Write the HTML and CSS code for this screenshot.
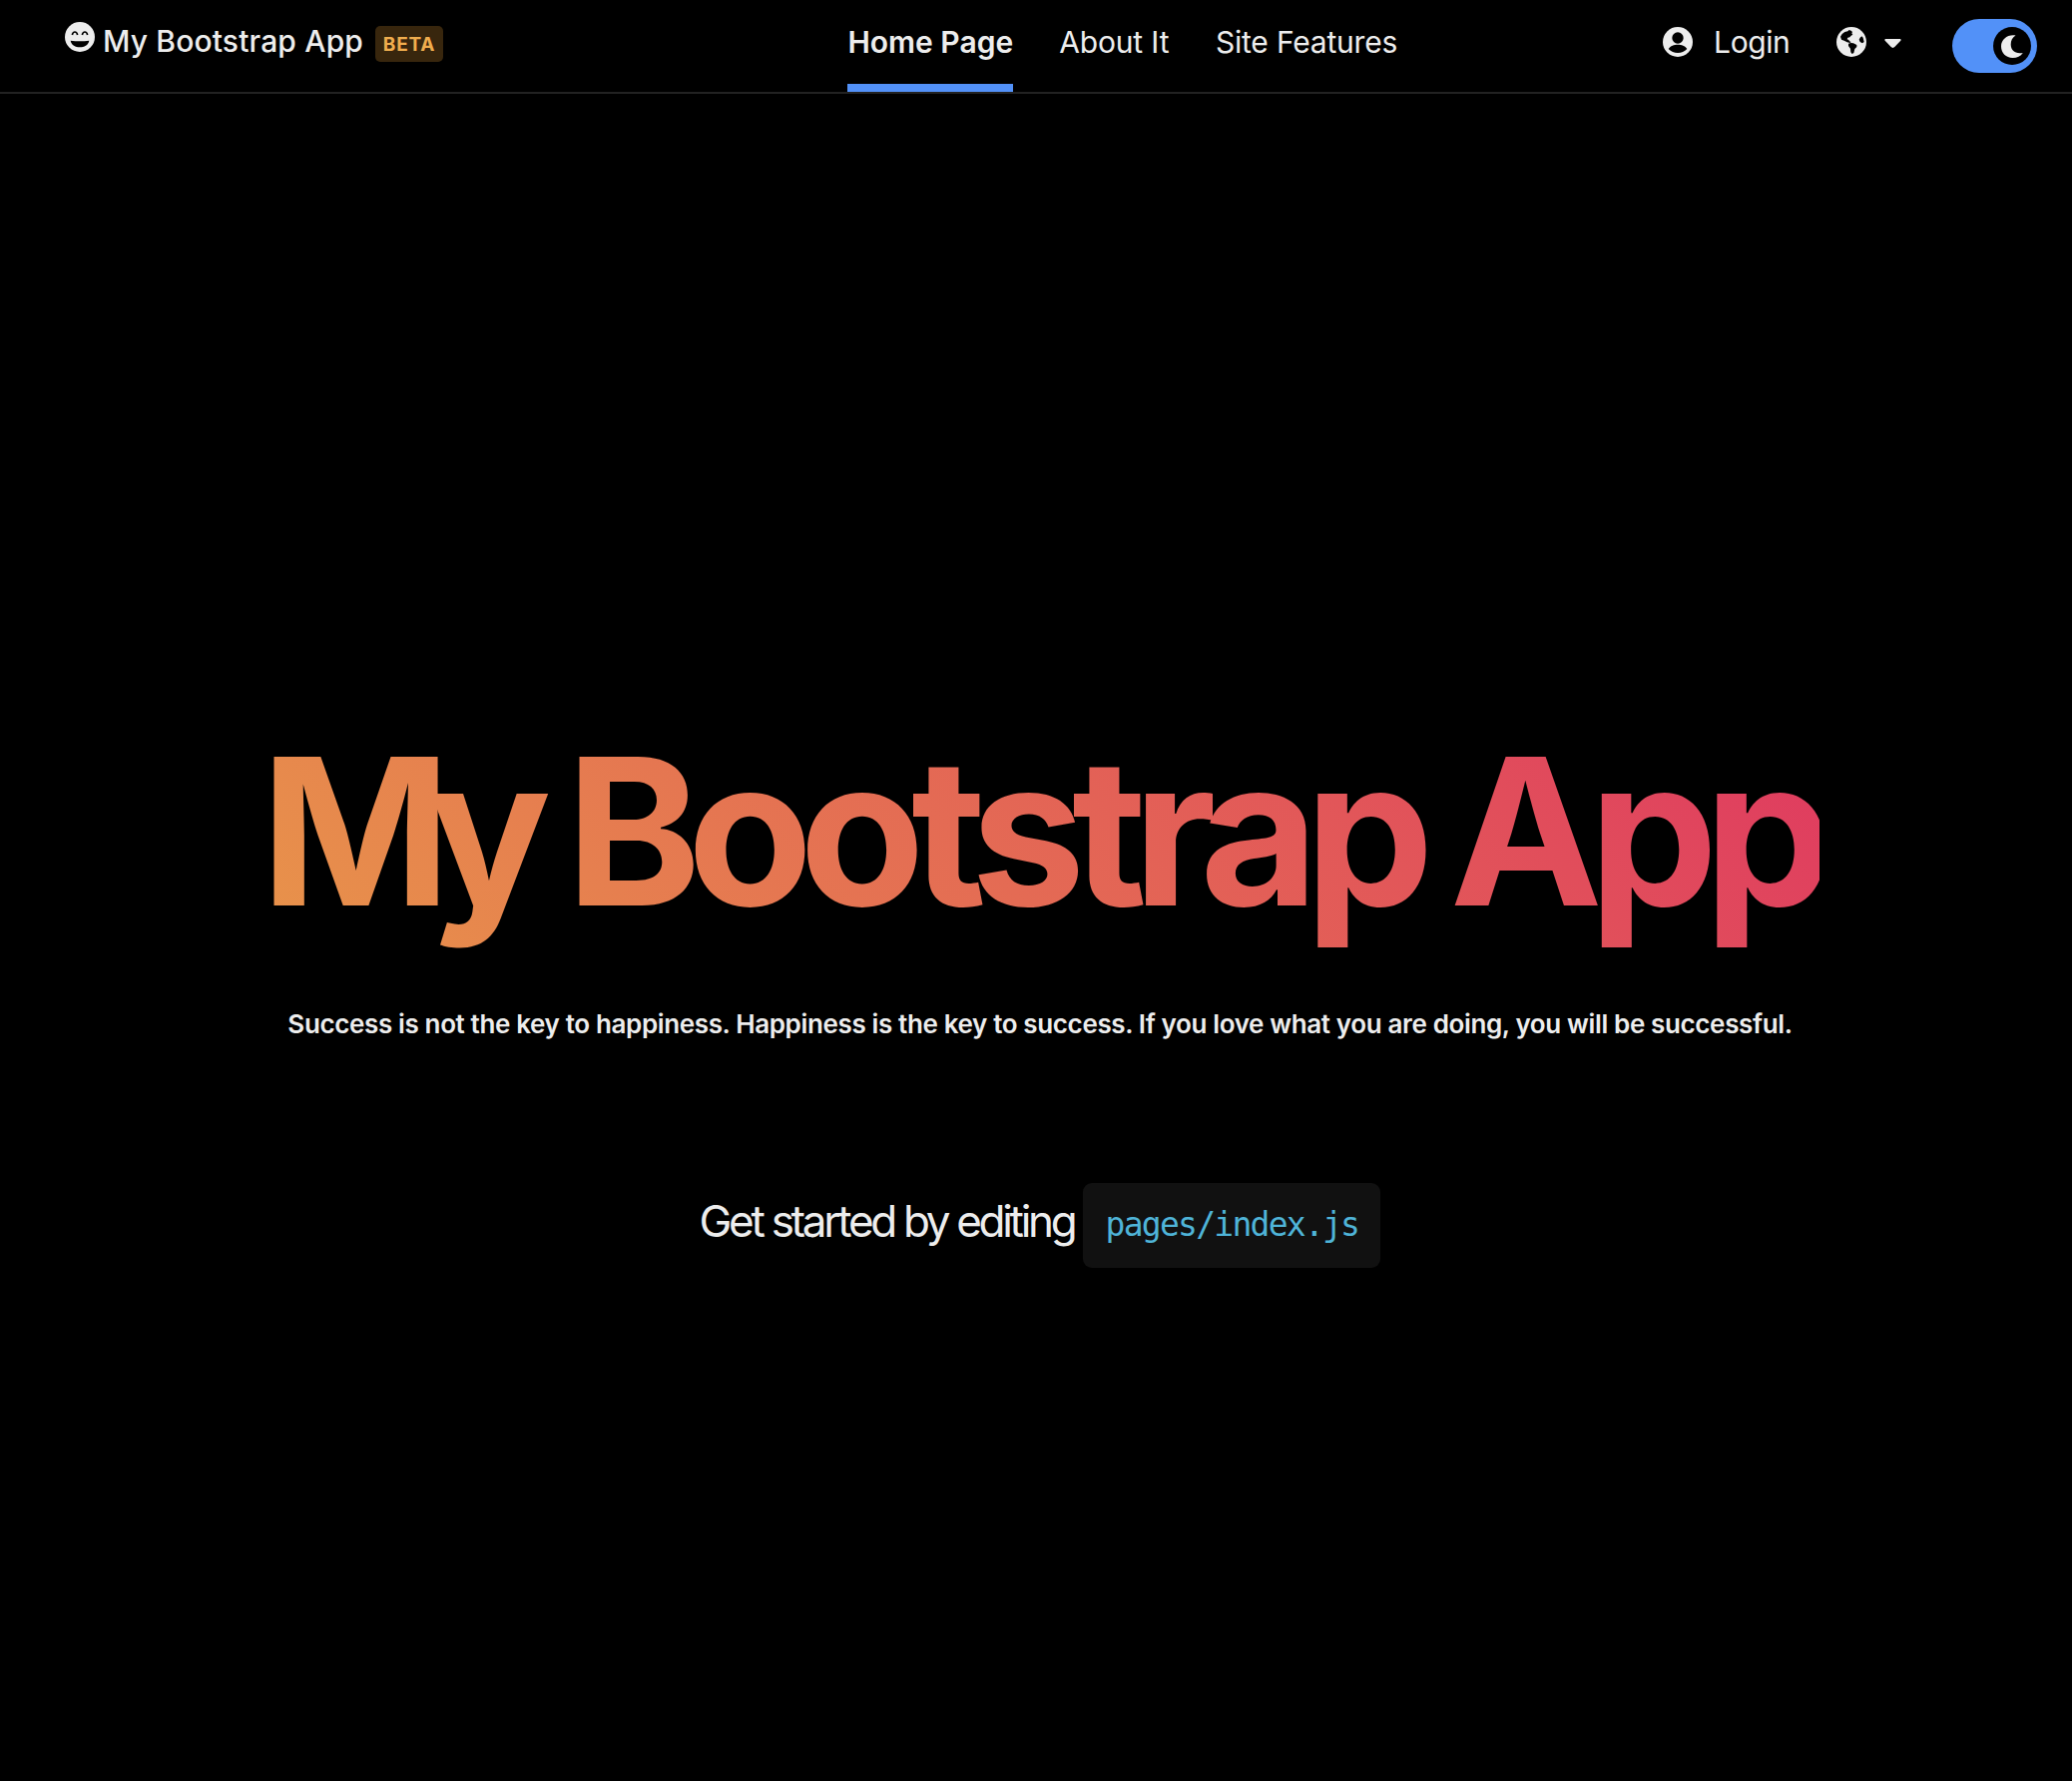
FILE: index.html
```html
<!DOCTYPE html>
<html lang="en">
<head>
<meta charset="utf-8">
<title>My Bootstrap App</title>
<link rel="stylesheet" href="styles.css">
</head>
<body>
<header class="navbar">
  <a class="brand">
    <svg class="brand-icon" viewBox="0 0 90 90"><circle cx="45" cy="45" r="45" fill="#ededed"/><path d="M22 39q2-9 8-9t8 9M52 39q2-9 8-9t8 9" fill="none" stroke="#000" stroke-width="5"/><path d="M17 56q28 4 56 0c-3 14-15 20-28 20S20 70 17 56z" fill="#000"/></svg>
    <span class="brand-name">My Bootstrap App</span>
    <span class="badge">BETA</span>
  </a>
  <nav class="links">
    <a class="link active">Home Page</a>
    <a class="link about">About It</a>
    <a class="link features">Site Features</a>
  </nav>
  <div class="tools">
    <svg class="round-icon" viewBox="0 0 90 90"><circle cx="45" cy="45" r="45" fill="#ededed"/><circle cx="45" cy="33" r="17" fill="#000"/><path d="M17 66c6-10 17-13 28-13s22 3 28 13c-8 8-17 12-28 12s-20-4-28-12z" fill="#000"/></svg>
    <a class="login">Login</a>
    <svg class="round-icon globe" viewBox="0 0 90 90"><circle cx="45" cy="45" r="45" fill="#ededed"/><path d="M12 29l5-8 8-6 9-2 4-4 6 2 4 4-2 4 3 4-5 3-4 5-6 1-2 5 5 2 2 4 5 2-3 3-9-2-9-5-8-3zM36 50l7-2 8 1 10 5v6l-6 6-3 12-5 3-4-5-1-11-6-8zM76 28l4 4 3 13-5 4-7-4-3-7 3-6z" fill="#000"/></svg>
    <svg class="caret" viewBox="0 0 17 9"><path d="M1.500 0h14c1 0 1.500 1 .8 1.800l-6 6.300c-1 1.100-2.600 1.100-3.600 0l-6-6.300C0 1 .5 0 1.500 0z" fill="#ededed"/></svg>
    <button class="switch" aria-label="Dark mode"><span class="knob"><svg class="moon" viewBox="0 0 22 23"><path d="M14.500.500C7-.9 0 4 0 11.500 0 18 5 23 11.500 23c4.500 0 8-1.800 10.300-5C14 19.500 9.700 15 9.700 9.500c0-4 1.600-7 4.800-9z" fill="#ededed"/></svg></span></button>
  </div>
</header>
<main class="hero">
  <h1 class="title"><span class="kern-wide">M</span><span class="kern">y </span>Bootstrap<span class="kern-space"> </span>App</h1>
  <p class="subtitle">Success is not the key to happiness. Happiness is the key to success. If you love what you are doing, you will be successful.</p>
  <p class="start"><span class="start-text">Get started by editing</span><code class="code">pages/index.js</code></p>
</main>
</body>
</html>
```
FILE: styles.css
```css
* { box-sizing: border-box; }
body { margin: 0; background: #000; color: #ededed; font-family: Inter, "Liberation Sans", sans-serif; }
.navbar { height: 94px; border-bottom: 2px solid #222; display: grid; grid-template-columns: 849.4px 1fr auto; padding-right: 34.600px; }
.brand { display: flex; align-items: flex-start; padding-left: 65px; }
.brand-icon { width: 30px; height: 30px; margin-top: 22px; }
.brand-name { font-size: 30px; font-weight: 500; line-height: 40px; margin: 21px 0 0 8px; white-space: nowrap; letter-spacing: .16px; }
.badge { width: 68px; height: 36px; margin: 26px 0 0 12px; background: #38260d; color: #f0ad4e; border-radius: 5px; font-size: 19px; font-weight: 700; line-height: 38px; text-align: center; letter-spacing: .8px; }
.links { display: flex; gap: 46px; }
.link { height: 92px; font-size: 30px; line-height: 84px; white-space: nowrap; }
.active { font-weight: 600; border-bottom: 8px solid #5291f8; }
.about { letter-spacing: -.15px; }
.features { letter-spacing: -.2px; margin-left: .6px; }
.tools { display: flex; align-items: flex-start; }
.round-icon { width: 30px; height: 30px; margin-top: 27px; }
.login { font-size: 30px; line-height: 84px; margin-left: 21px; letter-spacing: -.4px; }
.globe { margin-left: 47px; }
.caret { width: 17px; height: 9px; margin: 39px 51px 0 18px; }
.switch { width: 85px; height: 54px; margin-top: 19px; border: 0; border-radius: 27px; background: #5291f8; padding: 8px 6px 0 0; display: flex; justify-content: flex-end; align-items: flex-start; }
.knob { width: 38px; height: 38px; border-radius: 50%; background: #000; display: flex; align-items: center; justify-content: center; }
.moon { width: 22px; height: 23px; }
.hero { display: flex; flex-direction: column; align-items: center; padding: 618px 0 0 8px; }
.title { margin: 0; font-size: 205px; font-weight: 700; line-height: 240px; letter-spacing: -13.700px; white-space: nowrap; background: linear-gradient(45deg, #e8944a, #df3960); -webkit-background-clip: text; background-clip: text; color: transparent; }
.kern-wide { letter-spacing: -23px; }
.kern { letter-spacing: -17px; }
.kern-space { letter-spacing: -19px; }
.subtitle { margin: 54px 0 0; font-size: 26px; font-weight: 600; line-height: 40px; letter-spacing: -.365px; white-space: nowrap; }
.start { margin: 139px 0 0; display: flex; align-items: flex-start; }
.start-text { font-size: 44px; line-height: 76px; letter-spacing: -3.300px; white-space: nowrap; }
.code { margin-left: 9px; width: 298px; height: 85px; border-radius: 9px; background: #111; color: #4fb4d8; font: 33px/84px "DejaVu Sans Mono", monospace; letter-spacing: -1.750px; text-align: center; }
```
